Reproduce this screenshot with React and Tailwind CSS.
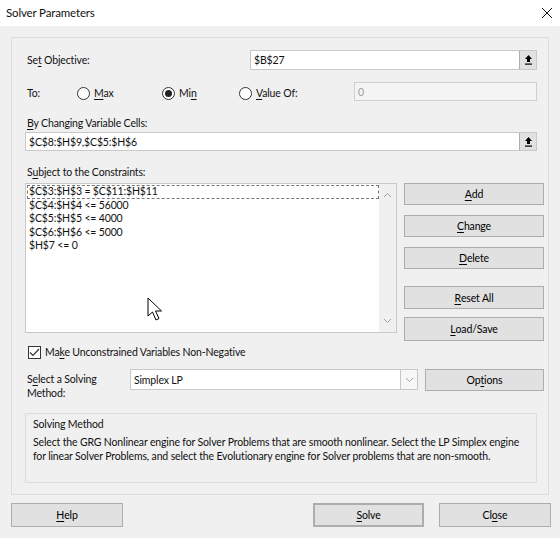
import React from "react";

const F = { fontFamily: 'Lato, "Open Sans", sans-serif' };

function U({ children }) {
  return <span className="underline underline-offset-2">{children}</span>;
}

function Btn({ children, className = "" }) {
  return (
    <div
      className={
        "flex items-center justify-center bg-[#e1e1e1] border border-[#adadad] text-black " +
        className
      }
    >
      {children}
    </div>
  );
}

function PickIcon() {
  return (
    <div className="w-[17px] h-full bg-[#e1e1e1] border-l border-[#adadad] flex items-center justify-center">
      <svg width="9" height="12" viewBox="0 0 9 12">
        <path d="M4.5 1 L8 5 L6 5 L6 8 L3 8 L3 5 L1 5 Z" fill="#000" />
        <rect x="1" y="9.5" width="7" height="1.2" fill="#000" />
      </svg>
    </div>
  );
}

function Radio({ checked }) {
  return (
    <div className="w-[13px] h-[13px] rounded-full border border-[#333] bg-white flex items-center justify-center">
      {checked && <div className="w-[7px] h-[7px] rounded-full bg-[#222]" />}
    </div>
  );
}

function Chevron({ dir }) {
  return (
    <svg width="9" height="6" viewBox="0 0 9 6">
      {dir === "up" ? (
        <path d="M1 5 L4.5 1.5 L8 5" stroke="#a0a0a0" strokeWidth="1" fill="none" />
      ) : (
        <path d="M1 1 L4.5 4.5 L8 1" stroke="#a0a0a0" strokeWidth="1" fill="none" />
      )}
    </svg>
  );
}

export default function App() {
  const constraints = [
    "$C$3:$H$3 = $C$11:$H$11",
    "$C$4:$H$4 <= 56000",
    "$C$5:$H$5 <= 4000",
    "$C$6:$H$6 <= 5000",
    "$H$7 <= 0",
  ];
  return (
    <div style={F} className="relative w-[560px] h-[538px] bg-[#f0f0f0] text-[10.5px] tracking-[-0.15px] leading-[14px] text-[#111] overflow-hidden">
      {/* Title bar */}
      <div className="h-[26px] bg-white flex items-center justify-between pl-[6px] pr-[6px]">
        <span className="text-[11.5px]">Solver Parameters</span>
        <svg width="12" height="12" viewBox="0 0 12 12" className="mr-[1px]">
          <path d="M1 1 L11 11 M11 1 L1 11" stroke="#111" strokeWidth="1" />
        </svg>
      </div>

      {/* Panel */}
      <div className="ml-[11px] mt-[11px] w-[538px] h-[458px] border border-[#dcdcdc] pl-[13px] pr-[4px]">
        {/* Set Objective */}
        <div className="mt-[12px] flex items-center h-[20px]">
          <div className="flex-1 pl-[2px]">
            Se<U>t</U> Objective:
          </div>
          <div className="w-[287px] h-[20px] mr-[7px] bg-white border border-[#c8c8c8] flex items-center">
            <div className="flex-1 pl-[3px]">$B$27</div>
            <PickIcon />
          </div>
        </div>

        {/* To row */}
        <div className="mt-[12px] flex items-center h-[19px]">
          <div className="w-[52px] pl-[2px] pt-[2px]">To:</div>
          <div className="flex items-center gap-[3px] w-[85px] pt-[3px]">
            <Radio />
            <span className="ml-[1px]">
              <U>M</U>ax
            </span>
          </div>
          <div className="flex items-center gap-[3px] w-[77px] pt-[3px]">
            <Radio checked />
            <span className="ml-[1px]">
              Mi<U>n</U>
            </span>
          </div>
          <div className="flex items-center gap-[3px] flex-1 pt-[3px]">
            <Radio />
            <span className="ml-[1px]">
              <U>V</U>alue Of:
            </span>
          </div>
          <div className="w-[183px] h-[19px] mr-[7px] bg-[#f4f4f4] border border-[#cfcfcf] pl-[3px] text-[#a0a0a0] flex items-center">
            0
          </div>
        </div>

        {/* By changing */}
        <div className="mt-[15px] pl-[2px] h-[15px] leading-[15px]">
          <U>B</U>y Changing Variable Cells:
        </div>
        <div className="mt-[1px] h-[19px] mr-[7px] bg-white border border-[#c8c8c8] flex items-center">
          <div className="flex-1 pl-[3px]">$C$8:$H$9,$C$5:$H$6</div>
          <PickIcon />
        </div>

        {/* Constraints */}
        <div className="mt-[14px] pl-[2px] h-[15px] leading-[15px]">
          S<U>u</U>bject to the Constraints:
        </div>
        <div className="mt-[3px] flex items-start">
          <div className="w-[372px] h-[150px] bg-white border border-[#c8c8c8] flex">
            <div className="flex-1 pt-[1px] pl-[1px]">
              {constraints.map((c, i) => (
                <div
                  key={i}
                  className={
                    "h-[13.5px] leading-[13.5px] pl-[2px] " +
                    (i === 0 ? "outline outline-1 outline-dashed outline-[#777] -outline-offset-1" : "")
                  }
                >
                  {c}
                </div>
              ))}
            </div>
            <div className="w-[17px] h-full bg-[#f0f0f0] flex flex-col items-center justify-between pt-[8px] pb-[8px]">
              <Chevron dir="up" />
              <Chevron dir="down" />
            </div>
          </div>
          <div className="ml-[7px] flex flex-col w-[140px]">
            <Btn className="h-[22px]">
              <U>A</U>dd
            </Btn>
            <Btn className="h-[22px] mt-[10px]">
              <U>C</U>hange
            </Btn>
            <Btn className="h-[22px] mt-[10px]">
              <U>D</U>elete
            </Btn>
            <Btn className="h-[23px] mt-[17px]">
              <U>R</U>eset All
            </Btn>
            <Btn className="h-[24px] mt-[8px]">
              <U>L</U>oad/Save
            </Btn>
          </div>
        </div>

        {/* Checkbox */}
        <div className="mt-[4px] flex items-center h-[14px]">
          <div className="ml-[3px] w-[13px] h-[13px] border border-[#333] bg-white flex items-center justify-center">
            <svg width="11" height="9" viewBox="0 0 11 9">
              <path d="M1 4.5 L4 7.5 L10 1" stroke="#333" strokeWidth="1.2" fill="none" />
            </svg>
          </div>
          <span className="ml-[4px]">
            Ma<U>k</U>e Unconstrained Variables Non-Negative
          </span>
        </div>

        {/* Solving method select */}
        <div className="mt-[10px] flex items-start h-[22px]">
          <div className="w-[105px] pl-[2px] leading-[14px] pt-[3px]">
            <div>
              S<U>e</U>lect a Solving
            </div>
            <div>Method:</div>
          </div>
          <div className="w-[288px] h-[21px] bg-white border border-[#c8c8c8] flex items-center">
            <div className="flex-1 pl-[3px]">Simplex LP</div>
            <div className="w-[17px] h-full border-l border-[#c8c8c8] bg-[#f7f7f7] flex items-center justify-center">
              <Chevron dir="down" />
            </div>
          </div>
          <Btn className="ml-[7px] w-[119px] h-[22px]">
            Op<U>t</U>ions
          </Btn>
        </div>

        {/* Group box */}
        <div className="mt-[22px] w-[512px] h-[70px] border border-[#dcdcdc] pl-[7px] pr-[4px]">
          <div className="mt-[3px] h-[15px] leading-[15px]">Solving Method</div>
          <div className="mt-[4px] leading-[13.5px] whitespace-nowrap">
            <div>
              Select the GRG Nonlinear engine for Solver Problems that are smooth nonlinear. Select the LP Simplex engine
            </div>
            <div>
              for linear Solver Problems, and select the Evolutionary engine for Solver problems that are non-smooth.
            </div>
          </div>
        </div>
      </div>

      {/* Bottom buttons */}
      <div className="mt-[8px] flex items-center">
        <Btn className="ml-[11px] w-[112px] h-[24px]">
          <U>H</U>elp
        </Btn>
        <Btn className="ml-[190px] w-[111px] h-[24px] border-[#0078d7] border-[2px]">
          <U>S</U>olve
        </Btn>
        <Btn className="ml-[15px] w-[112px] h-[24px]">
          Cl<U>o</U>se
        </Btn>
      </div>

      {/* Mouse cursor */}
      <svg className="absolute left-[147px] top-[297px]" width="19" height="26" viewBox="0 0 19 26">
        <path
          d="M1 1 L1 19 L5.5 15 L9 23 L12 21.5 L8.5 14 L14.5 14 Z"
          fill="#fff"
          stroke="#000"
          strokeWidth="1"
          strokeLinejoin="miter"
        />
      </svg>
    </div>
  );
}
